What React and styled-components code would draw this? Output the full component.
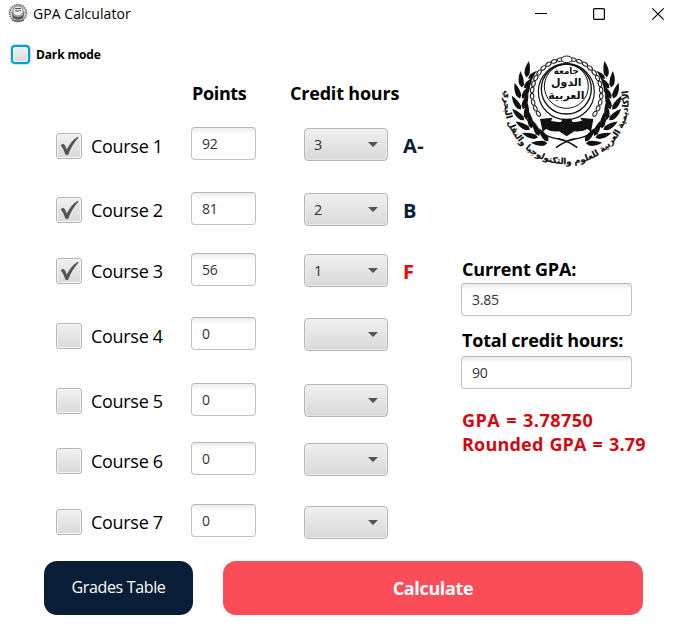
import React, { useState } from "react";
import styled, { createGlobalStyle, css } from "styled-components";

const Global = createGlobalStyle`
  * { box-sizing: border-box; }
  body { margin: 0; background: #fff; font-family: "Open Sans", "Noto Sans", sans-serif; color: #000; }
`;

const Window = styled.div`
  width: 685px;
  height: 632px;
  background: #fff;
  display: flex;
  flex-direction: column;
  overflow: hidden;
`;

const TitleBar = styled.header`
  height: 28px;
  flex: none;
  display: flex;
  align-items: center;
  padding-left: 8px;
`;

const Title = styled.span`
  flex: 1;
  margin-left: 5px;
  font-size: 14px;
  line-height: 20px;
  letter-spacing: 0.05px;
`;

const WindowControls = styled.div`
  display: flex;
  gap: 46px;
  margin-top: -1px;
  padding-right: 21px;
  svg { display: block; width: 12px; height: 12px; overflow: visible; fill: none; stroke: #000; }
  svg:last-child { margin-left: 1px; }
`;

const ThemeToggle = styled.label`
  height: 20px;
  margin: 17px 0 0 11px;
  display: flex;
  align-items: center;
  gap: 6px;
  font-size: 12px;
  line-height: 16px;
  padding-bottom: 1px;
  font-weight: 700;
  letter-spacing: -0.15px;
`;

const Box = styled.span`
  width: 26px;
  height: 26px;
  flex: none;
  display: block;
  border: 1px solid #b5b5b5;
  border-radius: 3px;
  background: linear-gradient(#f0f0f0, #dadada);
  box-shadow: inset 0 0 0 1px #f7f7f7;
  svg { display: block; width: 24px; height: 24px; overflow: visible; }
  ${(p) => p.$focused && css`
    width: 19px;
    height: 19px;
    border: 2px solid #039ed3;
    border-radius: 4px;
    box-shadow: 0 0 0 1px #bfe8f5, inset 0 0 0 1px #f7f7f7;
  `}
`;

const Content = styled.main`
  height: 495px;
  flex: none;
  display: flex;
`;

const Courses = styled.section`
  width: 461px;
  flex: none;
`;

const Headings = styled.div`
  display: grid;
  grid-template-columns: 98px 1fr;
  padding: 15px 0 0 192px;
  height: 62px;
  font-size: 18px;
  line-height: 26px;
  font-weight: 700;
`;

const Heading = styled.span`
  letter-spacing: ${(p) => p.$tracking}px;
`;

const Row = styled.div`
  height: ${(p) => p.$height}px;
  padding-left: 56px;
  display: grid;
  grid-template-columns: 135px 113px 99px 1fr;
  align-items: start;
`;

const CourseLabel = styled.label`
  display: flex;
  gap: 9px;
  padding-top: ${(p) => p.$drop}px;
  font-size: 18px;
  line-height: 26px;
  letter-spacing: -0.3px;
  white-space: nowrap;
`;

const Field = styled.input`
  width: ${(p) => p.$width || 65}px;
  height: 33px;
  display: block;
  padding: 0 10px 1px;
  border: 1px solid #c2c2c2;
  border-top-color: #b5b5b5;
  border-radius: 4px;
  background: linear-gradient(#ececec, #fff 6px);
  font: 14px "Open Sans", "Noto Sans", sans-serif;
  letter-spacing: -0.2px;
  color: #333;
  outline: none;
`;

const Select = styled.button`
  width: 84px;
  height: 33px;
  margin: ${(p) => p.$drop}px 0 0;
  padding: 0 9px;
  display: flex;
  justify-content: space-between;
  align-items: center;
  border: 1px solid #b5b5b5;
  border-radius: 4px;
  background: linear-gradient(#f0f0f0, #d9d9d9);
  box-shadow: inset 0 0 0 1px #f2f2f2aa;
  font: 14.5px "Open Sans", "Noto Sans", sans-serif;
  color: #333;
  svg { width: 10px; height: 5px; }
`;

const Grade = styled.strong`
  padding-top: 5px;
  font-size: 20px;
  line-height: 27px;
  letter-spacing: 0.5px;
  color: ${(p) => (p.$failed ? "#f00" : "#0a1d37")};
`;

const Side = styled.aside`
  width: 200px;
  margin-top: -20px;
  display: flex;
  flex-direction: column;
`;

const LogoFrame = styled.div`
  width: 150px;
  height: 130px;
  margin-left: 29px;
  svg { display: block; width: 150px; height: 130px; overflow: visible; }
`;

const Totals = styled.div`
  margin-top: 82px;
`;

const TotalLabel = styled.div`
  height: ${(p) => p.$height}px;
  padding: ${(p) => p.$top || 0}px 0 0 1px;
  font-size: 18px;
  line-height: 25px;
  font-weight: 700;
  letter-spacing: -0.2px;
  white-space: nowrap;
`;

const Results = styled.div`
  margin-top: 19px;
  padding-left: 1px;
`;

const Result = styled.div`
  height: 24px;
  font-size: 18px;
  line-height: 24px;
  font-weight: 700;
  letter-spacing: ${(p) => p.$tracking}px;
  word-spacing: 1px;
  color: #d10a10;
  white-space: nowrap;
`;

const Actions = styled.footer`
  display: flex;
  gap: 30px;
  padding: 1px 0 0 44px;
`;

const Action = styled.button`
  height: 54px;
  width: ${(p) => (p.$primary ? 420 : 149)}px;
  padding: 0 0 ${(p) => (p.$primary ? 0 : 3)}px;
  border: 0;
  border-radius: 13px;
  color: #fff;
  background: ${(p) => (p.$primary ? "#fb4d57" : "#0a1d37")};
  font: ${(p) => (p.$primary ? "700 18px" : "400 16px")} "Open Sans", "Noto Sans", sans-serif;
  letter-spacing: -0.35px;
`;

const polar = (cx, cy, r, deg) => {
  const a = (deg * Math.PI) / 180;
  return [cx + r * Math.cos(a), cy + r * Math.sin(a)];
};

const leaves = [];
for (let i = 0; i < 8; i++) {
  const deg = 114 + i * 13.8;
  [-1, 1].forEach((side) => {
    const [x, y] = polar(229, 168, 136 + side * 3, deg);
    leaves.push({ x, y, turn: deg + 90 - side * 26 + 4 });
  });
}

const chain = [];
for (let i = 0; i < 12; i++) {
  const deg = 259 - i * 10.4;
  const [x, y] = polar(230, 146, 104, deg);
  chain.push({ x, y, turn: deg + 90 });
}

function Branch() {
  return (
    <g>
      {leaves.map((l, i) => (
        <path key={i} d="M0 0L9-7Q27-12 50 0Q29 9 9 7Z" transform={`translate(${l.x} ${l.y}) rotate(${l.turn})`} />
      ))}
      <circle cx="230" cy="146" r="112" fill="#fff" />
      {chain.map((c, i) => (
        <ellipse key={i} rx="8.5" ry="5.2" fill="#fff" stroke="#222" strokeWidth="3.2" transform={`translate(${c.x} ${c.y}) rotate(${c.turn})`} />
      ))}
      <path d="M104 212Q145 276 207 282Q232 286 262 308" fill="none" stroke="#111" strokeWidth="4.5" />
    </g>
  );
}

function Emblem() {
  return (
    <svg viewBox="0 0 450 390" fill="#111">
      <defs>
        <clipPath id="left-half"><path d="M-20-20H230V420H-20Z" /></clipPath>
      </defs>
      <g clipPath="url(#left-half)"><Branch /></g>
      <g transform="matrix(-1 0 0 1 460 0)"><g clipPath="url(#left-half)"><Branch /></g></g>
      <path d="M205 282Q232 286 262 308M255 282Q228 286 198 308" fill="none" stroke="#111" strokeWidth="4.5" />
      <circle cx="229" cy="140" r="84" fill="#fff" stroke="#111" strokeWidth="3.5" />
      <circle cx="229" cy="132" r="75" fill="none" stroke="#111" strokeWidth="4" />
      <circle cx="229" cy="124" r="66" fill="none" stroke="#111" strokeWidth="3" />
      <ellipse cx="230" cy="43" rx="16" ry="10" fill="#fff" stroke="#111" strokeWidth="3" />
      <path d="M150 222L188 218L183 227Q203 232 213 231L218 221H243L248 231Q258 232 276 227L271 218L310 222L303 261L292 252Q273 262 253 259L230 274L207 259Q185 262 168 252L158 261Z" />
      <g direction="rtl" fontFamily="DejaVu Sans, sans-serif" textAnchor="middle" fontWeight="700">
        <text x="229" y="88" fontSize="26">جامعة</text>
        <text x="229" y="124" fontSize="33">الدول</text>
        <text x="229" y="161" fontSize="33">العربية</text>
      </g>
      <path id="motto-line" d="M44 138A187 192 0 1 0 414 138" fill="none" />
      <text direction="rtl" fontFamily="DejaVu Sans, sans-serif" fontSize="25.8" fontWeight="700" stroke="#111" strokeWidth=".6" textAnchor="middle">
        <textPath href="#motto-line" startOffset="50%">الأكاديمية العربية للعلوم والتكنولوجيا والنقل البحري</textPath>
      </text>
    </svg>
  );
}

const AppIcon = styled.span`
  width: 20px;
  height: 20px;
  margin-top: -2px;
  svg { display: block; width: 20px; height: 20px; }
`;

function SmallEmblem() {
  return (
    <AppIcon>
      <svg viewBox="0 0 20 20" fill="none" stroke="#555">
        <circle cx="10" cy="10" r="8.4" fill="#d8d8d8" stroke="#777" strokeWidth="1.8" strokeDasharray="1.5 .7" />
        <circle cx="10" cy="8" r="5" fill="#eee" stroke="#888" />
        <path d="M7 5.5h6M7 8l1.5-1 1 2 2-2 1.5 1" strokeWidth="1" />
        <path d="M4 9q1 5 6 5t6-5l-1 6q-5 3-10 0z" fill="#555" strokeWidth=".5" />
        <path d="M4 17q6 2.5 12 0" strokeWidth="1.3" />
      </svg>
    </AppIcon>
  );
}

const rows = [
  { points: "92", hours: "3", grade: "A-", height: 65, check: 6, select: 1 },
  { points: "81", hours: "2", grade: "B", height: 61, check: 5, select: 1 },
  { points: "56", hours: "1", grade: "F", height: 64, check: 5, select: 1 },
  { points: "0", height: 66, check: 6, select: 1 },
  { points: "0", height: 59, check: 5, select: 1 },
  { points: "0", height: 62, check: 6, select: 1 },
  { points: "0", height: 33, check: 5, select: 2 },
];

function Check() {
  return (
    <svg viewBox="0 0 24 24" fill="#555">
      <path d="M3.6 11L6.6 9.7Q8.2 10.8 9.8 15.5C12.5 10.2 15.7 6 20.8 2.8L21.6 3.4C16.8 8.5 13.8 13.8 11.3 20.4Q10 21.6 8.4 20.4Q6.4 14.4 3.6 11Z" />
    </svg>
  );
}

function CourseRow({ row, number }) {
  const [points, setPoints] = useState(row.points);
  return (
    <Row $height={row.height}>
      <CourseLabel $drop={row.check}>
        <Box>{row.grade && <Check />}</Box>
        Course {number}
      </CourseLabel>
      <Field value={points} onChange={(e) => setPoints(e.target.value)} />
      <Select $drop={row.select}>
        <span>{row.hours}</span>
        <svg viewBox="0 0 10 5"><path d="M0 0H10L5.6 4.6Q5 5 4.4 4.6Z" fill="#555" /></svg>
      </Select>
      {row.grade && <Grade $failed={row.grade === "F"}>{row.grade}</Grade>}
    </Row>
  );
}

export default function App() {
  return (
    <Window>
      <Global />
      <TitleBar>
        <SmallEmblem />
        <Title>GPA Calculator</Title>
        <WindowControls>
          <svg viewBox="0 0 12 12"><path d="M0 5.5H12" /></svg>
          <svg viewBox="0 0 12 12"><rect x=".6" y=".6" width="10.8" height="10.8" rx="1" strokeWidth="1.2" /></svg>
          <svg viewBox="0 0 12 12"><path d="M.3 .3L11.7 11.7M11.7 .3L.3 11.7" strokeWidth="1.2" /></svg>
        </WindowControls>
      </TitleBar>
      <ThemeToggle><Box $focused />Dark mode</ThemeToggle>
      <Content>
        <Courses>
          <Headings>
            <Heading $tracking={-0.35}>Points</Heading>
            <Heading $tracking={-0.2}>Credit hours</Heading>
          </Headings>
          {rows.map((row, i) => <CourseRow key={i} row={row} number={i + 1} />)}
        </Courses>
        <Side>
          <LogoFrame><Emblem /></LogoFrame>
          <Totals>
            <TotalLabel $height={26}>Current GPA:</TotalLabel>
            <Field $width={171} defaultValue="3.85" />
            <TotalLabel $height={40} $top={12}>Total credit hours:</TotalLabel>
            <Field $width={171} defaultValue="90" />
          </Totals>
          <Results>
            <Result $tracking={0.45}>GPA = 3.78750</Result>
            <Result $tracking={0.2}>Rounded GPA = 3.79</Result>
          </Results>
        </Side>
      </Content>
      <Actions>
        <Action>Grades Table</Action>
        <Action $primary>Calculate</Action>
      </Actions>
    </Window>
  );
}
